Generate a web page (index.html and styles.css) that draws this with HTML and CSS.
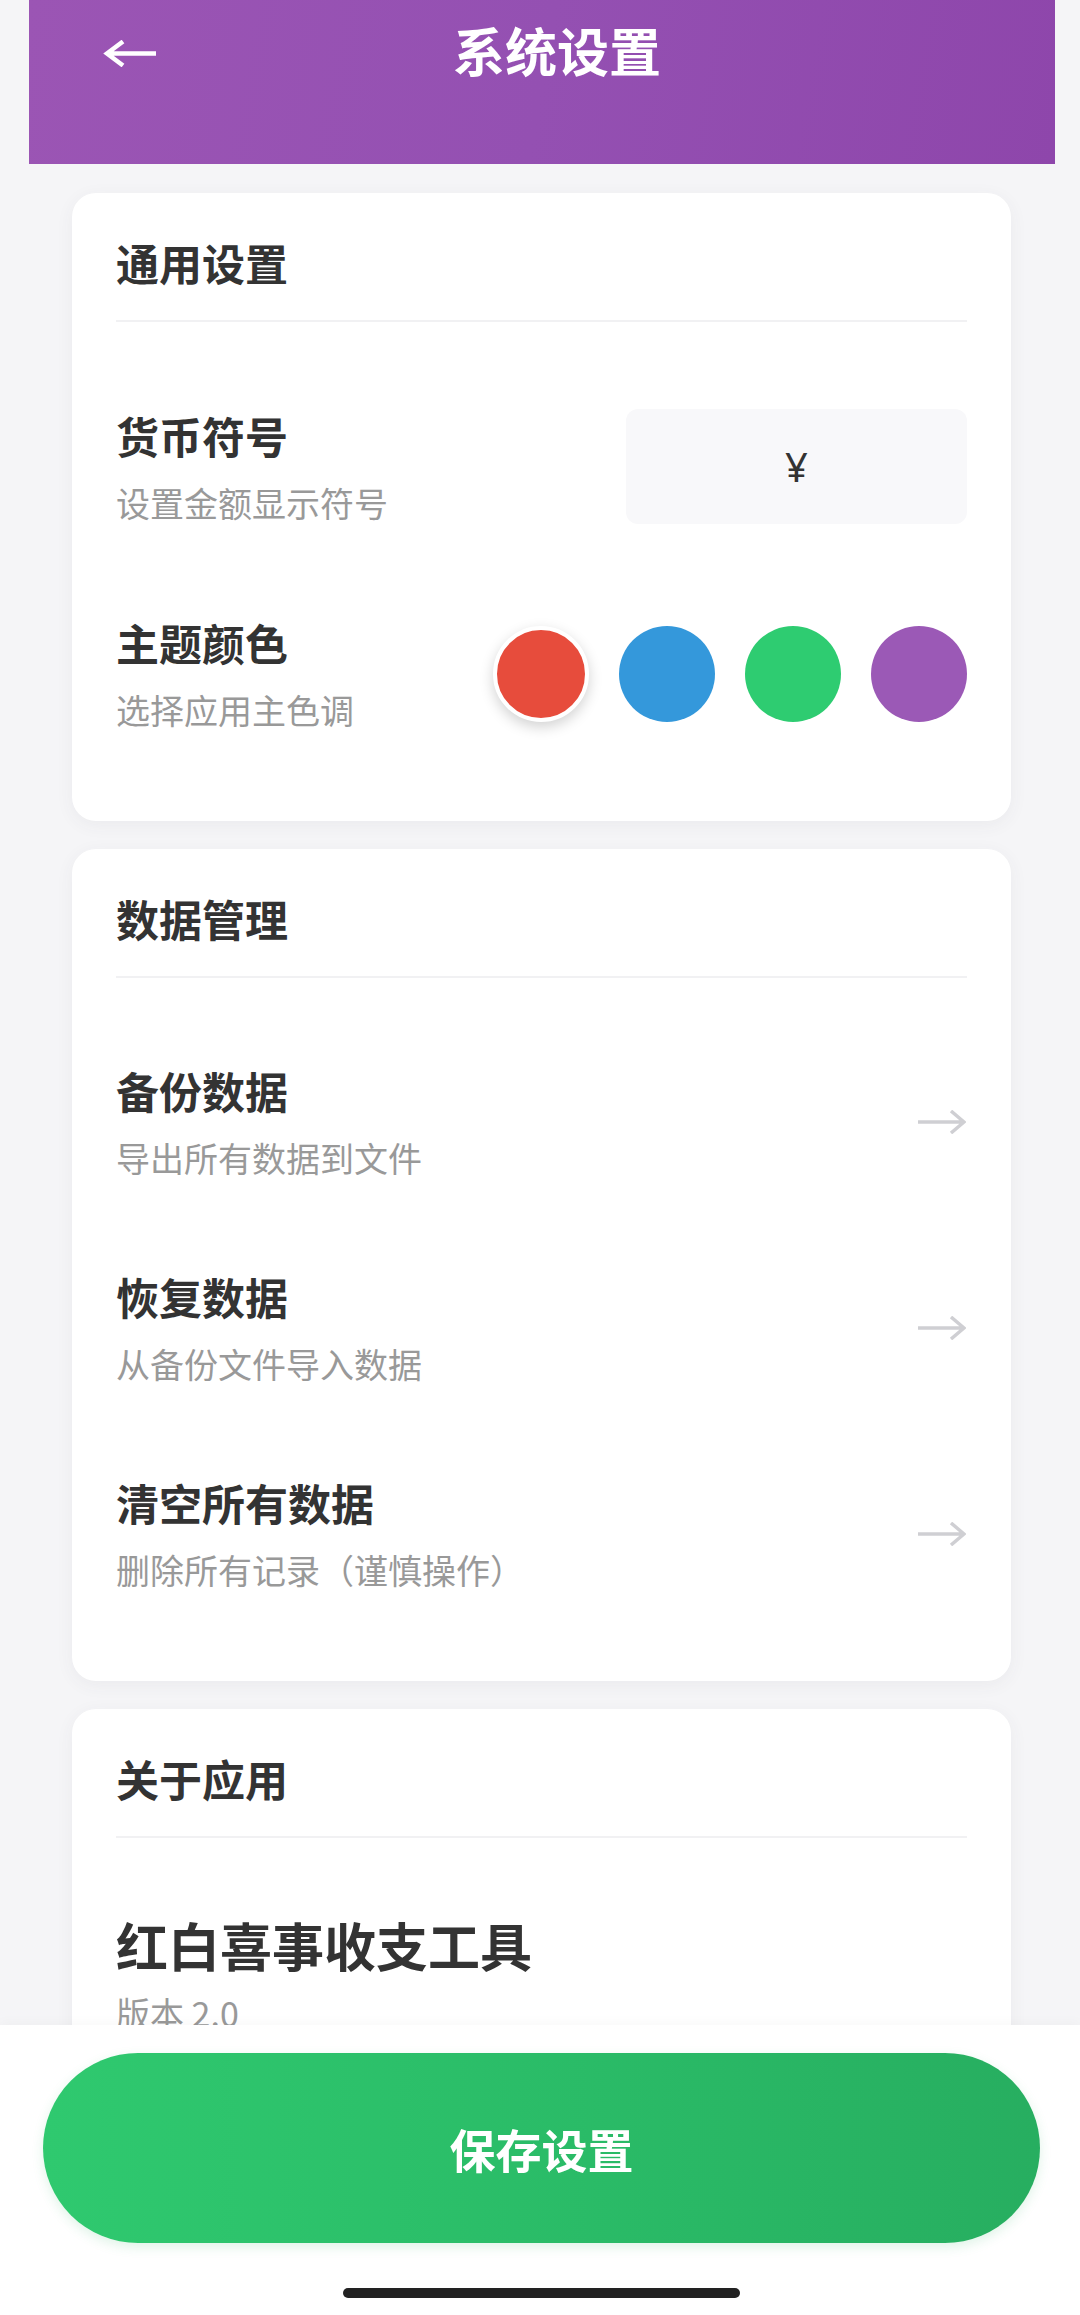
FILE: index.html
```html
<!DOCTYPE html>
<html lang="zh-CN">
<head>
<meta charset="utf-8">
<meta name="viewport" content="width=1080">
<title>系统设置</title>
<link rel="stylesheet" href="styles.css">
</head>
<body>
<div class="page">
  <header class="topbar">
    <button class="back" aria-label="返回">
      <svg width="53" height="27" viewBox="0 0 53 27"><path d="M4 13.5 H53 M20 1.5 L4 13.5 L20 25.5" fill="none" stroke="#fff" stroke-width="4.5" stroke-linecap="butt" stroke-linejoin="miter"/></svg>
    </button>
    <h1 class="topbar-title">系统设置</h1>
    <span class="topbar-spacer"></span>
  </header>

  <main class="content">
    <section class="card">
      <h2 class="card-title">通用设置</h2>
      <div class="row">
        <div class="row-text">
          <div class="row-title">货币符号</div>
          <div class="row-desc">设置金额显示符号</div>
        </div>
        <input class="currency" type="text" value="¥" readonly>
      </div>
      <div class="row">
        <div class="row-text">
          <div class="row-title">主题颜色</div>
          <div class="row-desc">选择应用主色调</div>
        </div>
        <div class="swatches">
          <span class="swatch swatch-red selected"></span>
          <span class="swatch swatch-blue"></span>
          <span class="swatch swatch-green"></span>
          <span class="swatch swatch-purple"></span>
        </div>
      </div>
    </section>

    <section class="card">
      <h2 class="card-title">数据管理</h2>
      <div class="row">
        <div class="row-text">
          <div class="row-title">备份数据</div>
          <div class="row-desc">导出所有数据到文件</div>
        </div>
        <svg class="chevron" width="48" height="24" viewBox="0 0 48 24"><path d="M0 12 H46 M33 1 L46 12 L33 23" fill="none" stroke="#cfcfd3" stroke-width="3.5"/></svg>
      </div>
      <div class="row">
        <div class="row-text">
          <div class="row-title">恢复数据</div>
          <div class="row-desc">从备份文件导入数据</div>
        </div>
        <svg class="chevron" width="48" height="24" viewBox="0 0 48 24"><path d="M0 12 H46 M33 1 L46 12 L33 23" fill="none" stroke="#cfcfd3" stroke-width="3.5"/></svg>
      </div>
      <div class="row">
        <div class="row-text">
          <div class="row-title">清空所有数据</div>
          <div class="row-desc">删除所有记录（谨慎操作）</div>
        </div>
        <svg class="chevron" width="48" height="24" viewBox="0 0 48 24"><path d="M0 12 H46 M33 1 L46 12 L33 23" fill="none" stroke="#cfcfd3" stroke-width="3.5"/></svg>
      </div>
    </section>

    <section class="card">
      <h2 class="card-title">关于应用</h2>
      <div class="about">
        <div class="app-name">红白喜事收支工具</div>
        <div class="row-desc app-version">版本 2.0</div>
      </div>
    </section>
  </main>

  <footer class="bottom-bar">
    <button class="save">保存设置</button>
    <div class="home-indicator"></div>
  </footer>
</div>
</body>
</html>
```
FILE: styles.css
```css
* { box-sizing: border-box; }

html, body {
  margin: 0;
  padding: 0;
}

body {
  background: #f5f5f7;
  font-family: "Noto Sans CJK SC", "Noto Sans", sans-serif;
  color: #333;
  height: 2315px;
  overflow: hidden;
}

.page {
  width: 1080px;
}

.topbar {
  margin: 0 25px 0 29px;
  height: 164px;
  padding: 23px 74px 81px 74px;
  display: flex;
  align-items: center;
  background: linear-gradient(100deg, #9b55b4 0%, #9450b2 50%, #8e46ab 100%);
}

.back {
  width: 53px;
  height: 60px;
  padding: 0;
  margin: 0;
  border: none;
  background: none;
  display: flex;
  align-items: center;
}

.back svg { display: block; }

.topbar-title {
  flex: 1;
  margin: 0;
  padding-bottom: 6px;
  text-align: center;
  color: #fff;
  font-size: 52px;
  line-height: 60px;
  font-weight: 700;
}

.topbar-spacer {
  width: 23px;
}

.content {
  padding-top: 29px;
}

.card {
  background: #fff;
  margin: 0 69px 28px 72px;
  border-radius: 24px;
  padding: 44px 44px 44px 44px;
  box-shadow: 0 4px 18px rgba(60, 60, 90, 0.06);
}

.card-title {
  margin: 0 0 41px 0;
  font-size: 43px;
  line-height: 50px;
  font-weight: 700;
  color: #333;
  padding-bottom: 33px;
  border-bottom: 2px solid #f1f1f3;
}

.row {
  display: flex;
  justify-content: space-between;
  align-items: center;
  padding: 46px 0 47px 0;
}

.row-title {
  font-size: 43px;
  line-height: 50px;
  font-weight: 700;
  color: #333;
}

.row-desc {
  margin-top: 23px;
  font-size: 34px;
  line-height: 40px;
  color: #999;
}

.currency {
  width: 341px;
  height: 115px;
  border: none;
  border-radius: 12px;
  background: #f8f8fa;
  text-align: center;
  font-family: "Noto Sans", "Noto Sans CJK SC", sans-serif;
  font-size: 40px;
  color: #333;
  outline: none;
  padding: 0;
}

.swatches {
  display: flex;
  gap: 30px;
}

.swatch {
  width: 96px;
  height: 96px;
  border-radius: 50%;
  display: block;
}

.swatch-red { background: #e74c3c; }
.swatch-blue { background: #3498db; }
.swatch-green { background: #2ecc71; }
.swatch-purple { background: #9b59b6; }

.swatch.selected {
  border: 4px solid #fff;
  box-shadow: 0 5px 14px rgba(0, 0, 0, 0.18);
}

.chevron {
  display: block;
  margin-right: 1px;
}

.about {
  padding-top: 36px;
}

.app-name {
  font-size: 52px;
  line-height: 60px;
  font-weight: 700;
  color: #333;
}

.app-version {
  margin-top: 18px;
}

.bottom-bar {
  position: fixed;
  left: 0;
  right: 0;
  bottom: 0;
  height: 290px;
  background: #fff;
  padding: 28px 40px 17px 43px;
  box-shadow: 0 -2px 12px rgba(0, 0, 0, 0.03);
}

.save {
  display: block;
  width: 100%;
  height: 190px;
  border: none;
  border-radius: 95px;
  background: linear-gradient(90deg, #2fc96f 0%, #2abb67 55%, #27ae60 100%);
  color: #fff;
  font-family: "Noto Sans CJK SC", "Noto Sans", sans-serif;
  font-size: 46px;
  font-weight: 700;
  box-shadow: 0 4px 12px rgba(39, 174, 96, 0.15);
}

.home-indicator {
  width: 397px;
  height: 10px;
  border-radius: 5px;
  background: #222;
  margin: 45px auto 0 auto;
}
```
